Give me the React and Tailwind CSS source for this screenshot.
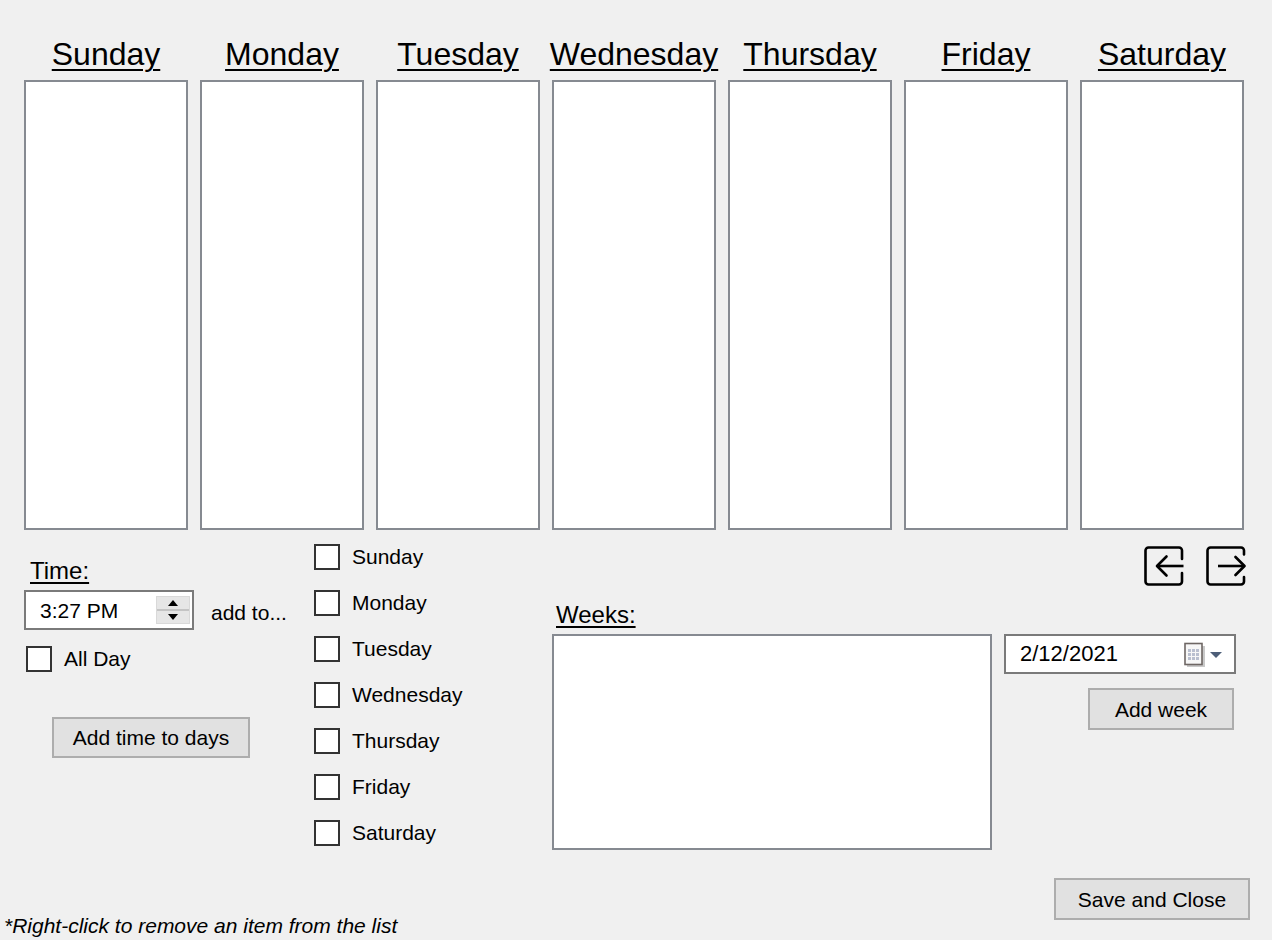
import React from "react";

const days = ["Sunday", "Monday", "Tuesday", "Wednesday", "Thursday", "Friday", "Saturday"];

function Check() {
  return <div className="w-[26px] h-[26px] shrink-0 border-2 border-[#333333] bg-white" />;
}

function LeftIcon() {
  return (
    <svg width="40" height="40" viewBox="0 0 40 40" fill="none" stroke="#000" strokeWidth="2.6" strokeLinecap="round" strokeLinejoin="round">
      <path d="M38 13 V4.5 a3 3 0 0 0 -3 -3 H4.5 a3 3 0 0 0 -3 3 V35.5 a3 3 0 0 0 3 3 H35 a3 3 0 0 0 3 -3 V27" />
      <path d="M13 20 H39.5" strokeLinecap="butt" />
      <path d="M22.5 10.5 L13 20 L22.5 29.5" />
    </svg>
  );
}

function RightIcon() {
  return (
    <svg width="40" height="40" viewBox="0 0 40 40" fill="none" stroke="#000" strokeWidth="2.6" strokeLinecap="round" strokeLinejoin="round">
      <path d="M38 8.5 V4.5 a3 3 0 0 0 -3 -3 H4.5 a3 3 0 0 0 -3 3 V35.5 a3 3 0 0 0 3 3 H35 a3 3 0 0 0 3 -3 V31" />
      <path d="M12 20 H38" strokeLinecap="butt" />
      <path d="M29.5 11 L38.5 20 L29.5 29" />
    </svg>
  );
}

function CalendarIcon() {
  return (
    <svg width="22" height="26" viewBox="0 0 22 26">
      <rect x="3" y="4" width="18" height="21" fill="#c9c9c9" />
      <rect x="1" y="1.5" width="17" height="21" fill="#f7f7f7" stroke="#6e6764" strokeWidth="1.6" />
      {[0, 1, 2].map((r) =>
        [0, 1, 2].map((c) => (
          <rect key={`${r}-${c}`} x={4 + c * 4} y={7 + r * 4} width="3" height="3" fill="#b9bfcf" />
        ))
      )}
    </svg>
  );
}

export default function App() {
  return (
    <div
      className="w-[1272px] h-[940px] bg-[#f0f0f0] text-black flex flex-col overflow-hidden"
      style={{ fontFamily: '"Liberation Sans", Arial, sans-serif' }}
    >
      {/* Day columns */}
      <div className="pt-[36px] pl-[24px] grid grid-cols-[repeat(7,164px)] gap-x-[12px]">
        {days.map((d) => (
          <div key={d} className="flex flex-col items-center">
            <div className="h-[36px] text-[32px] leading-[36px] underline decoration-2 underline-offset-[4px] whitespace-nowrap">
              {d}
            </div>
            <div className="mt-[8px] w-full h-[450px] border-2 border-[#868a91] bg-white" />
          </div>
        ))}
      </div>

      {/* Controls */}
      <div className="flex pl-[24px]">
        {/* Column 1 */}
        <div className="w-[290px] flex flex-col items-start">
          <div className="mt-[27px] ml-[6px] text-[24px] leading-[28px] underline decoration-2 underline-offset-[3px]">
            Time:
          </div>
          <div className="mt-[5px] flex items-center">
            <div className="w-[170px] h-[40px] border-2 border-[#7a7a7a] bg-white flex items-center justify-between">
              <span className="pl-[14px] text-[21px] leading-none">3:27 PM</span>
              <div className="mr-[2px] w-[34px] h-[28px] flex flex-col border border-[#d9d9d9] bg-[#e6e6e6]">
                <div className="flex-1 flex items-center justify-center border-b-2 border-[#c4c4c4]">
                  <div className="w-0 h-0 border-l-[5px] border-r-[5px] border-b-[6px] border-l-transparent border-r-transparent border-b-black" />
                </div>
                <div className="flex-1 flex items-center justify-center">
                  <div className="w-0 h-0 border-l-[5px] border-r-[5px] border-t-[6px] border-l-transparent border-r-transparent border-t-black" />
                </div>
              </div>
            </div>
            <span className="ml-[17px] mt-[4px] text-[21px] leading-none">add to...</span>
          </div>
          <div className="mt-[16px] ml-[2px] flex items-center">
            <Check />
            <span className="ml-[12px] text-[21px] leading-[24px]">All Day</span>
          </div>
          <button className="mt-[45px] ml-[28px] w-[198px] h-[41px] flex items-center justify-center border-2 border-[#adadad] bg-[#e1e1e1] text-[21px] leading-none">
            Add time to days
          </button>
        </div>

        {/* Column 2 */}
        <div className="w-[238px] pt-[14px] flex flex-col gap-[20px]">
          {days.map((d) => (
            <div key={d} className="flex items-center h-[26px]">
              <Check />
              <span className="ml-[12px] text-[21px] leading-[24px]">{d}</span>
            </div>
          ))}
        </div>

        {/* Column 3 */}
        <div className="w-[440px] flex flex-col items-start">
          <div className="mt-[71px] ml-[4px] text-[24px] leading-[28px] underline decoration-2 underline-offset-[3px]">
            Weeks:
          </div>
          <div className="mt-[5px] w-[440px] h-[216px] border-2 border-[#868a91] bg-white" />
        </div>

        {/* Column 4 */}
        <div className="ml-[12px] w-[246px] flex flex-col items-start">
          <div className="mt-[16px] w-full flex justify-end gap-[22px] pr-[4px]">
            <LeftIcon />
            <RightIcon />
          </div>
          <div className="mt-[48px] w-[232px] h-[40px] border-2 border-[#7a7a7a] bg-white flex items-center">
            <span className="pl-[14px] text-[22px] leading-none flex-1">2/12/2021</span>
            <div className="flex items-center mr-[12px] mt-[2px]">
              <CalendarIcon />
              <div className="ml-[4px] w-0 h-0 border-l-[6px] border-r-[6px] border-t-[6px] border-l-transparent border-r-transparent border-t-[#4d5e78]" />
            </div>
          </div>
          <button className="mt-[14px] ml-[84px] w-[146px] h-[42px] flex items-center justify-center border-2 border-[#adadad] bg-[#e1e1e1] text-[21px] leading-none">
            Add week
          </button>
        </div>
      </div>

      {/* Footer */}
      <div className="mt-auto pb-[2px] pl-[4px] pr-[22px] flex justify-between items-end">
        <span className="italic text-[21px] leading-[24px]">*Right-click to remove an item from the list</span>
        <button className="mb-[18px] w-[196px] h-[42px] flex items-center justify-center border-2 border-[#adadad] bg-[#e1e1e1] text-[21px] leading-none">
          Save and Close
        </button>
      </div>
    </div>
  );
}
